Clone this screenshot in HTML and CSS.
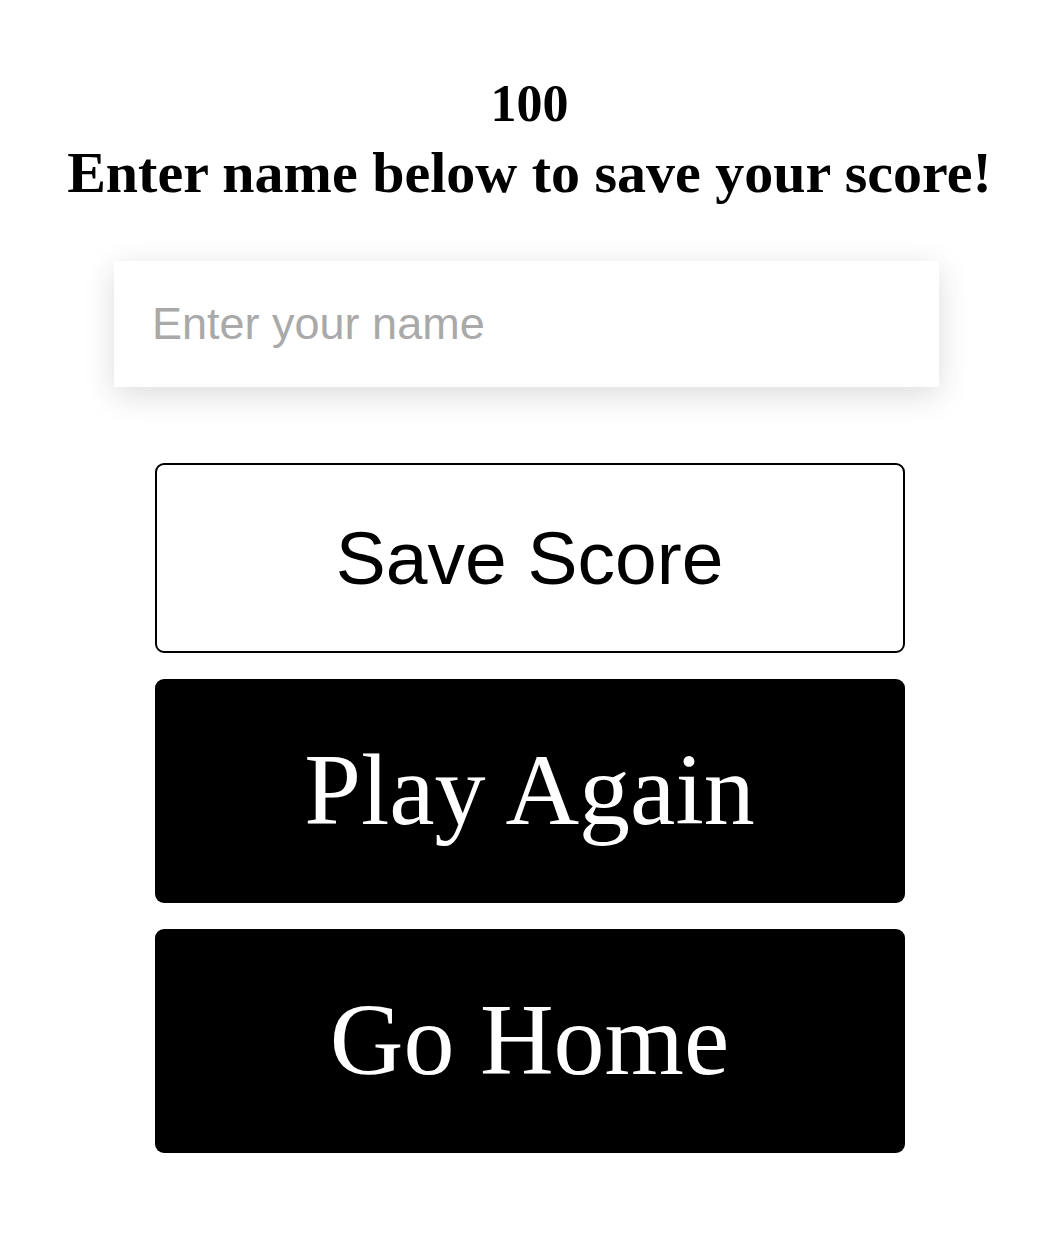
FILE: index.html
```html
<!DOCTYPE html>
<html lang="en">
<head>
<meta charset="utf-8">
<title>End</title>
<link rel="stylesheet" href="styles.css">
</head>
<body>
<main class="end">
  <h2 class="score">100</h2>
  <h1 class="prompt">Enter name below to save your score!</h1>
  <form class="save-form">
    <input class="name-input" type="text" placeholder="Enter your name">
    <button type="button" class="btn btn-save">Save Score</button>
  </form>
  <a class="btn btn-dark" href="#">Play Again</a>
  <a class="btn btn-dark" href="#">Go Home</a>
</main>
</body>
</html>
```
FILE: styles.css
```css
html, body {
  margin: 0;
  padding: 0;
  background: #fff;
}

body {
  font-family: "Liberation Serif", "Times New Roman", serif;
  color: #000;
}

.end {
  display: flex;
  flex-direction: column;
  align-items: center;
  padding-top: 74px;
  padding-left: 2px;
}

.score {
  margin: 0;
  font-size: 52px;
  line-height: 60px;
  font-weight: bold;
}

.prompt {
  margin: 4px 0 0;
  font-size: 58px;
  line-height: 70px;
  font-weight: bold;
  white-space: nowrap;
}

.save-form {
  display: flex;
  flex-direction: column;
  align-items: center;
  margin-top: 53px;
}

.name-input {
  box-sizing: border-box;
  width: 825px;
  height: 126px;
  margin-left: -6px;
  padding: 0 0 0 38px;
  border: none;
  outline: none;
  background: #fff;
  font-family: "Liberation Sans", Arial, sans-serif;
  font-size: 45px;
  color: #333;
  box-shadow: 0 8px 30px rgba(0, 0, 0, 0.14);
}

.name-input::placeholder {
  color: #a9a9a9;
}

.btn {
  box-sizing: border-box;
  width: 750px;
  display: flex;
  align-items: center;
  justify-content: center;
  border-radius: 9px;
  text-decoration: none;
}

.btn-save {
  margin-top: 76px;
  height: 190px;
  border: 2px solid #000;
  background: #fff;
  color: #000;
  font-family: "Liberation Sans", Arial, sans-serif;
  font-size: 75px;
  padding: 0;
}

.btn-dark {
  margin-top: 26px;
  height: 224px;
  padding-bottom: 4px;
  background: #000;
  color: #fff;
  font-family: "Liberation Serif", "Times New Roman", serif;
  font-size: 102px;
}
```
